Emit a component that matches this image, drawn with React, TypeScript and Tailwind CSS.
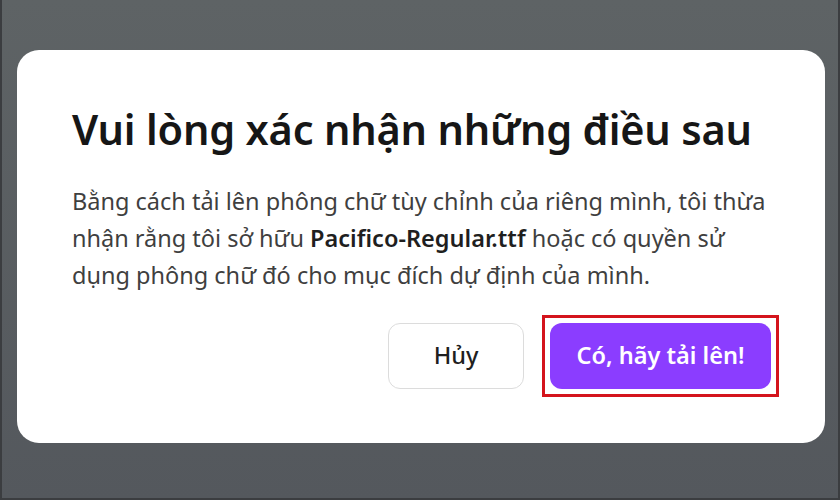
import React from "react";

export default function App() {
  return (
    <div
      className="w-[840px] h-[500px] overflow-hidden border-l-2 border-b-2 border-r-2 border-[#3b3d40] bg-gradient-to-b from-[#5e6365] to-[#54585d] pt-[50px] pl-[15px]"
      style={{ fontFamily: '"Noto Sans", "Open Sans", sans-serif' }}
    >
      <div className="w-[808px] h-[393px] rounded-[22px] bg-white pl-[55px] pr-[55px] pt-[54px] flex flex-col">
        <h1 className="text-[41.5px] leading-[50px] font-semibold text-[#161616] tracking-[-0.2px] whitespace-nowrap">
          Vui lòng xác nhận những điều sau
        </h1>
        <p className="mt-[29px] text-[23.5px] leading-[37px] text-[#3f3f3f]">
          Bằng cách tải lên phông chữ tùy chỉnh của riêng mình, tôi thừa nhận rằng tôi sở hữu{" "}
          <span className="font-semibold text-[#1f1f1f]">Pacifico-Regular.ttf</span> hoặc có quyền sử dụng phông chữ đó cho mục đích dự định của mình.
        </p>
        <div className="mt-[21px] flex items-center justify-end gap-[18px] mr-[-9px]">
          <button className="w-[136px] h-[66px] rounded-[12px] border border-[#dcdcdc] bg-white text-[23.5px] font-medium text-[#1f1f1f]">
            Hủy
          </button>
          <div className="border-[3px] border-[#d4141c] p-[5px]">
            <button className="w-[221px] h-[66px] rounded-[12px] bg-[#8b3dff] text-[23.5px] font-semibold text-white">
              Có, hãy tải lên!
            </button>
          </div>
        </div>
      </div>
    </div>
  );
}
